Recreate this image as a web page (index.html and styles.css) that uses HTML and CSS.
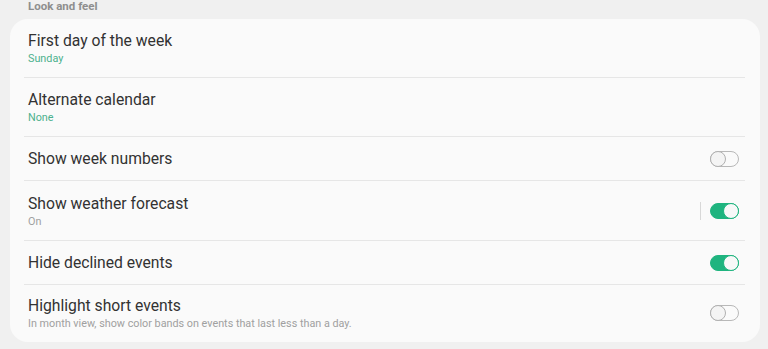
FILE: index.html
```html
<!DOCTYPE html>
<html lang="en">
<head>
    <meta charset="UTF-8">
    <meta name="viewport" content="width=device-width, initial-scale=1.0">
    <title>Look and feel</title>
    <link rel="stylesheet" href="styles.css">
</head>
<body>
    <div class="settings">
        <div class="section-title">Look and feel</div>

        <div class="card">
            <!-- First day -->
            <div class="row row-tall">
                <div class="row-text">
                    <div class="row-title">First day of the week</div>
                    <div class="row-sub accent">Sunday</div>
                </div>
            </div>
            <div class="divider"></div>

            <!-- Alternate calendar -->
            <div class="row row-tall">
                <div class="row-text">
                    <div class="row-title">Alternate calendar</div>
                    <div class="row-sub accent">None</div>
                </div>
            </div>
            <div class="divider"></div>

            <!-- Week numbers -->
            <div class="row row-short">
                <div class="row-text">
                    <div class="row-title">Show week numbers</div>
                </div>
                <button class="switch"><span class="knob"></span></button>
            </div>
            <div class="divider"></div>

            <!-- Weather -->
            <div class="row row-tall row-weather">
                <div class="row-text">
                    <div class="row-title">Show weather forecast</div>
                    <div class="row-sub">On</div>
                </div>
                <span class="vline"></span>
                <button class="switch on"><span class="knob"></span></button>
            </div>
            <div class="divider"></div>

            <!-- Declined -->
            <div class="row row-short">
                <div class="row-text">
                    <div class="row-title">Hide declined events</div>
                </div>
                <button class="switch on"><span class="knob"></span></button>
            </div>
            <div class="divider"></div>

            <!-- Short events -->
            <div class="row row-last">
                <div class="row-text">
                    <div class="row-title">Highlight short events</div>
                    <div class="row-sub">In month view, show color bands on events that last less than a day.</div>
                </div>
                <button class="switch"><span class="knob"></span></button>
            </div>
        </div>
    </div>

    <script>
        document.querySelectorAll('.switch').forEach(sw => {
            sw.addEventListener('click', () => sw.classList.toggle('on'));
        });
    </script>
</body>
</html>
```

FILE: styles.css
```css
* {
    margin: 0;
    padding: 0;
    box-sizing: border-box;
    font-family: Roboto, 'Noto Sans', sans-serif;
}

body {
    background: #f0f0f0;
    color: #2a2a2a;
    min-height: 100vh;
    overflow: hidden;
}

.settings {
    padding: 0 8px 0 10px;
}

.section-title {
    padding-left: 18px;
    font-size: 11.5px;
    font-weight: 700;
    line-height: 13px;
    color: #8e8e8e;
    margin-bottom: 6px;
}

/* Card */
.card {
    background: #fafafa;
    border-radius: 18px;
    display: flex;
    flex-direction: column;
}

.row {
    display: flex;
    align-items: center;
    padding: 0 21px 0 18px;
}

.row-tall {
    height: 58px;
}

.row-weather {
    height: 59px;
}

.row-short {
    height: 43px;
}

.row-last {
    height: 57px;
    padding-bottom: 1px;
}

.row-text {
    flex: 1;
    display: flex;
    flex-direction: column;
}

.row-title {
    font-size: 15.7px;
    line-height: 19px;
    color: #323232;
}

.row-sub {
    font-size: 10.8px;
    line-height: 13px;
    margin-top: 2px;
    color: #a0a0a0;
}

.row-sub.accent {
    color: #4cb18d;
}

.divider {
    height: 1px;
    margin: 0 15px 0 14px;
    background: #e6e6e6;
}

.vline {
    width: 1px;
    height: 18px;
    background: #d8d8d8;
    margin-right: 9px;
}

/* Switch */
.switch {
    position: relative;
    width: 29px;
    height: 16px;
    border-radius: 8px;
    border: 1px solid #b8b8b8;
    background: transparent;
    cursor: pointer;
}

.switch .knob {
    position: absolute;
    top: -1px;
    left: -1px;
    width: 16px;
    height: 16px;
    border-radius: 50%;
    background: #f4f4f4;
    border: 1px solid #b0b0b0;
}

.switch.on {
    background: #1fb47f;
    border-color: #1fb47f;
}

.switch.on .knob {
    left: auto;
    right: -1px;
    background: #f8f8f8;
    border-color: #1fb47f;
}
```
